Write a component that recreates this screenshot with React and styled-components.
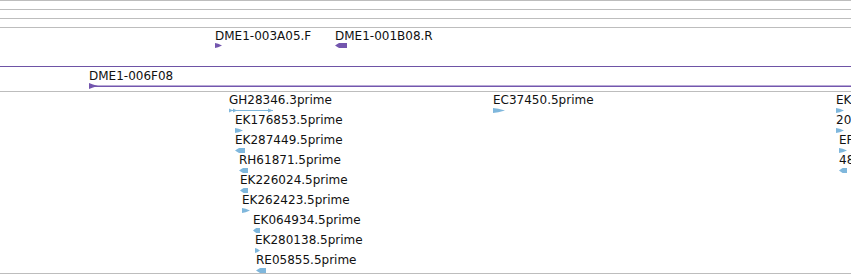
import React from 'react';
import styled, { createGlobalStyle } from 'styled-components';

const GlobalStyle = createGlobalStyle`
  html, body {
    margin: 0;
    padding: 0;
    background: #ffffff;
  }
  body {
    font-family: "DejaVu Sans", "Liberation Sans", sans-serif;
  }
`;

const Page = styled.div`
  width: 851px;
  height: 275px;
  overflow: hidden;
  background: #ffffff;
`;

const RulerRow = styled.div`
  height: 8px;
  border-top: 1px solid #bdbdbd;
`;

const Track = styled.div`
  position: relative;
  height: ${p => p.$height}px;
  border-top: 1px solid ${p => (p.$purple ? '#6e53a6' : '#bdbdbd')};
  border-bottom: ${p => (p.$last ? '1px solid #bdbdbd' : 'none')};
`;

const Lane = styled.div`
  position: relative;
  height: ${p => p.$height || 20}px;
`;

const Feature = styled.div`
  position: absolute;
  top: ${p => p.$top}px;
  left: ${p => p.$x}px;
  display: flex;
  flex-direction: column;
  align-items: flex-start;
  gap: ${p => p.$gap || 0}px;
`;

const Label = styled.span`
  display: block;
  font-size: 12px;
  line-height: 14px;
  color: #111;
  white-space: nowrap;
`;

const Glyph = styled.svg`
  display: block;
  overflow: visible;
`;

const PURPLE = '#7356ae';
const BLUE = '#7fb7dc';

const Arrow = ({ w, dir, color }) => {
  const pts =
    dir === 'r'
      ? `0,0 ${w * 0.45},0.7 ${w},2.5 ${w * 0.45},4.3 0,5`
      : `0,2.5 ${Math.min(4, w * 0.45)},0 ${w},0 ${w},5 ${Math.min(4, w * 0.45)},5`;
  return (
    <Glyph width={w} height={5} viewBox={`0 0 ${w} 5`}>
      <polygon points={pts} fill={color} />
    </Glyph>
  );
};

const LongArrow = ({ w, color }) => (
  <Glyph width={w} height={5} viewBox={`0 0 ${w} 5`}>
    <rect x="0" y="2" width={w} height="1" fill={color} />
    <polygon points="0,0.5 4,2.5 0,4.5" fill={color} />
    <polygon points="4,0.5 8,2.5 4,4.5" fill={color} />
    <polygon points={`${w - 5},0.5 ${w},2.5 ${w - 5},4.5`} fill={color} />
  </Glyph>
);

const LineArrow = ({ w, color }) => (
  <Glyph width={w} height={6} viewBox={`0 0 ${w} 6`}>
    <rect x="0" y="2.5" width={w} height="1.5" fill={color} />
    <polygon points="0,0 4,1.5 9,3 4,4.5 0,6" fill={color} />
  </Glyph>
);

const lanes = [
  [
    { x: 229, name: 'GH28346.3prime', glyph: 'long', w: 44 },
    { x: 493, name: 'EC37450.5prime', dir: 'r', w: 12 },
    { x: 836, name: 'EK176854.5prime', dir: 'r', w: 8 },
  ],
  [
    { x: 235, name: 'EK176853.5prime', dir: 'r', w: 8 },
    { x: 836, name: '20R54461.5prime', dir: 'r', w: 8 },
  ],
  [
    { x: 235, name: 'EK287449.5prime', dir: 'l', w: 10 },
    { x: 839, name: 'EF290112.5prime', dir: 'r', w: 8 },
  ],
  [
    { x: 239, name: 'RH61871.5prime', dir: 'l', w: 9 },
    { x: 839, name: '48R22061.5prime', dir: 'l', w: 8 },
  ],
  [{ x: 240, name: 'EK226024.5prime', dir: 'l', w: 8 }],
  [{ x: 242, name: 'EK262423.5prime', dir: 'r', w: 8 }],
  [{ x: 253, name: 'EK064934.5prime', dir: 'l', w: 7 }],
  [{ x: 255, name: 'EK280138.5prime', dir: 'r', w: 5 }],
  [{ x: 256, name: 'RE05855.5prime', dir: 'l', w: 10 }],
];

const App = () => (
  <Page>
    <GlobalStyle />
    <RulerRow />
    <RulerRow />
    <RulerRow />
    <Track $height={38}>
      <Lane $height={38}>
        <Feature $x={215} $top={1}>
          <Label>DME1-003A05.F</Label>
          <Arrow w={7} dir="r" color={PURPLE} />
        </Feature>
        <Feature $x={335} $top={1}>
          <Label>DME1-001B08.R</Label>
          <Arrow w={12} dir="l" color={PURPLE} />
        </Feature>
      </Lane>
    </Track>
    <Track $height={24} $purple>
      <Lane $height={24}>
        <Feature $x={89} $top={2}>
          <Label>DME1-006F08</Label>
          <LineArrow w={851 - 89} color={PURPLE} />
        </Feature>
      </Lane>
    </Track>
    <Track $height={181} $last>
      {lanes.map((lane, i) => (
        <Lane key={i}>
          {lane.map(f => (
            <Feature key={f.name} $x={f.x} $top={1} $gap={1}>
              <Label>{f.name}</Label>
              {f.glyph === 'long' ? (
                <LongArrow w={f.w} color={BLUE} />
              ) : (
                <Arrow w={f.w} dir={f.dir} color={BLUE} />
              )}
            </Feature>
          ))}
        </Lane>
      ))}
    </Track>
  </Page>
);

export default App;
